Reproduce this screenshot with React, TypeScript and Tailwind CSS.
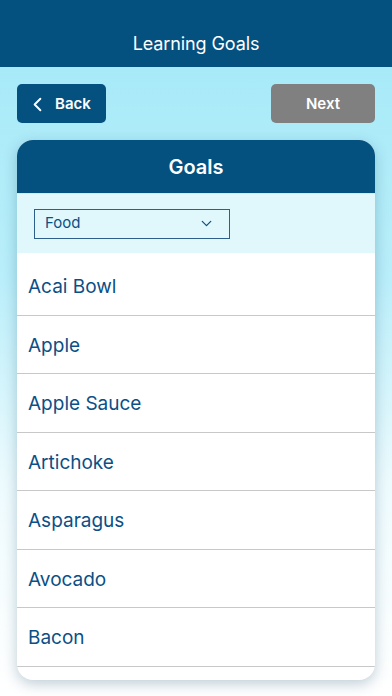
import { ChevronLeft, ChevronDown } from 'lucide-react'

const foods = ['Acai Bowl', 'Apple', 'Apple Sauce', 'Artichoke', 'Asparagus', 'Avocado', 'Bacon']

export default function App() {
  return (
    <div
      className="w-[392px] h-[696px] overflow-hidden flex flex-col bg-[linear-gradient(180deg,#a3e9f8_0%,#b9eefa_40%,#eefbfe_70%,#ffffff_100%)]"
      style={{ fontFamily: 'Inter, "Noto Sans", sans-serif' }}
    >
      {/* Header */}
      <div className="h-[67px] shrink-0 bg-[#04507f] flex items-end justify-center pb-[10px]">
        <h1 className="text-white text-[18px] tracking-[-0.1px]">Learning Goals</h1>
      </div>

      {/* Nav buttons */}
      <div className="flex justify-between px-[17px] pt-[17px]">
        <button className="w-[89px] h-[39px] rounded-[5px] bg-[#04507f] text-white flex items-center gap-[6px] pl-[9px] pt-[2px] text-[15px] font-semibold">
          <ChevronLeft className="w-[23px] h-[23px]" strokeWidth={2} />
          Back
        </button>
        <button className="w-[104px] h-[39px] rounded-[5px] bg-[#808080] text-white pt-[2px] text-[15px] font-semibold">
          Next
        </button>
      </div>

      {/* Card */}
      <div className="mx-[17px] mt-[17px] h-[540px] rounded-[16px] bg-white overflow-hidden shadow-[0_4px_14px_rgba(0,60,90,0.25)] flex flex-col">
        <div className="h-[53px] shrink-0 bg-[#04507f] flex items-center justify-center">
          <h2 className="text-white text-[20px] font-semibold">Goals</h2>
        </div>
        <div className="h-[60px] shrink-0 bg-[#e0f7fc] border-t border-[#c9eef7] flex items-center px-[17px]">
          <div className="w-[196px] h-[30px] border border-[#2d5f8a] flex items-center justify-between pl-[10px] pr-[14px] text-[#0b4f86] text-[15px]">
            <span>Food</span>
            <ChevronDown className="w-[17px] h-[17px]" strokeWidth={1.75} />
          </div>
        </div>
        <ul className="flex flex-col pt-[4px]">
          {foods.map((f) => (
            <li
              key={f}
              className="h-[58.5px] shrink-0 border-b border-[#c8c8c8] flex items-center pl-[11px] pt-[3px] text-[#0b4f86] text-[19px]"
            >
              {f}
            </li>
          ))}
          <li className="h-[58.5px] shrink-0" />
        </ul>
      </div>
    </div>
  )
}
